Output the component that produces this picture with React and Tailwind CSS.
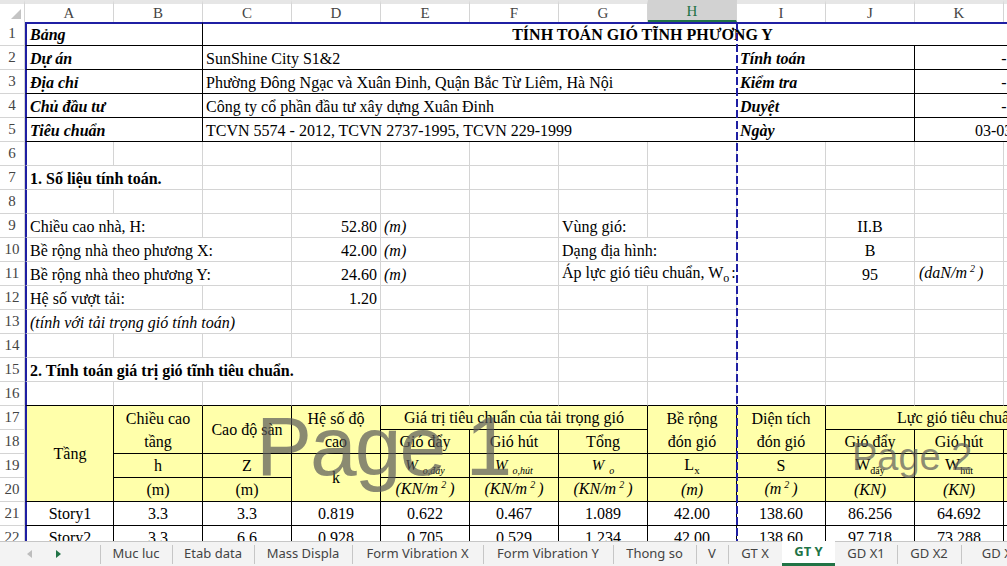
import React from "react";

// grid placement classes, written out so Tailwind picks them up
const COL = [
  "col-start-1", "col-start-2", "col-start-3", "col-start-4", "col-start-5",
  "col-start-6", "col-start-7", "col-start-8", "col-start-9", "col-start-10",
  "col-start-11", "col-start-12", "col-start-13",
];
const ROW = [
  "row-start-1", "row-start-2", "row-start-3", "row-start-4", "row-start-5",
  "row-start-6", "row-start-7", "row-start-8", "row-start-9", "row-start-10",
  "row-start-11", "row-start-12", "row-start-13", "row-start-14", "row-start-15",
  "row-start-16", "row-start-17", "row-start-18", "row-start-19", "row-start-20",
  "row-start-21", "row-start-22", "row-start-23",
];
const CSPAN = [
  "col-span-1", "col-span-1", "col-span-2", "col-span-3", "col-span-4",
  "col-span-5", "col-span-6", "col-span-7", "col-span-8", "col-span-9",
  "col-span-10", "col-span-11", "col-span-12",
];
const RSPAN = ["row-span-1", "row-span-1", "row-span-2", "row-span-3", "row-span-4"];
const JUSTIFY = { s: "justify-start", c: "justify-center", e: "justify-end" };

const LETTERS = ["A", "B", "C", "D", "E", "F", "G", "H", "I", "J", "K", "L"];

const TABS = [
  { name: "Muc luc", w: "w-[72px]" },
  { name: "Etab data", w: "w-[82px]" },
  { name: "Mass Displa", w: "w-[98px]" },
  { name: "Form Vibration X", w: "w-[131px]" },
  { name: "Form Vibration Y", w: "w-[130px]" },
  { name: "Thong so", w: "w-[83px]" },
  { name: "V", w: "w-[32px]" },
  { name: "GT X", w: "w-[54px]" },
  { name: "GT Y", w: "w-[53px]", active: true },
  { name: "GD X1", w: "w-[62px]" },
  { name: "GD X2", w: "w-[64px]" },
  { name: "GD X3", w: "w-[79px]" },
];

const INFO = [
  ["Dự án", "SunShine City S1&2", "Tính toán", "-"],
  ["Địa chỉ", "Phường Đông Ngạc và Xuân Đinh, Quận Bắc Từ Liêm, Hà Nội", "Kiểm tra", "-"],
  ["Chủ đầu tư", "Công ty cổ phần đầu tư xây dựng Xuân Đinh", "Duyệt", "-"],
  ["Tiêu chuẩn", "TCVN 5574 - 2012, TCVN 2737-1995, TCVN 229-1999", "Ngày", "03-03-2020"],
];

const STORIES = [
  ["Story1", "3.3", "3.3", "0.819", "0.622", "0.467", "1.089", "42.00", "138.60", "86.256", "64.692"],
  ["Story2", "3.3", "6.6", "0.928", "0.705", "0.529", "1.234", "42.00", "138.60", "97.718", "73.288"],
];

function WItalic({ sub }) {
  return (
    <span className="italic">
      <span className="text-[15px]">W</span>
      <span className="text-[10px] relative top-[4px] ml-[5px]">{sub}</span>
    </span>
  );
}

function Unit({ base }) {
  return (
    <span className="italic">
      ({base}
      <span className="text-[10px] relative -top-[6px] mx-[3px]">2</span>)
    </span>
  );
}

const CELLS = [
  { r: 1, c: 1, cs: 2, rb: "k", bb: "k", cls: "font-bold italic", t: "Bảng" },
  {
    r: 1, c: 3, cs: 10, rb: "n", bb: "k", j: "c", cls: "font-bold pr-[14px]",
    t: "TÍNH TOÁN GIÓ TĨNH PHƯƠNG Y",
  },
  ...INFO.flatMap((row, i) => [
    { r: i + 2, c: 1, cs: 2, rb: "k", bb: "k", cls: "font-bold italic", t: row[0] },
    { r: i + 2, c: 3, cs: 6, rb: "n", bb: "k", t: row[1] },
    { r: i + 2, c: 9, cs: 2, rb: "k", bb: "k", cls: "font-bold italic", t: row[2] },
    i === 3
      ? { r: i + 2, c: 11, cs: 2, rb: "n", bb: "k", cls: "pl-[60px]", t: row[3] }
      : { r: i + 2, c: 11, cs: 2, rb: "n", bb: "k", j: "c", t: row[3] },
  ]),

  { r: 7, c: 1, cs: 2, cls: "font-bold", t: "1. Số liệu tính toán." },
  { r: 9, c: 1, cs: 2, t: "Chiều cao nhà, H:" },
  { r: 9, c: 4, j: "e", t: "52.80" },
  { r: 9, c: 5, cls: "italic", t: "(m)" },
  { r: 9, c: 7, t: "Vùng gió:" },
  { r: 9, c: 10, j: "c", t: "II.B" },
  { r: 10, c: 1, cs: 3, t: "Bề rộng nhà theo phương X:" },
  { r: 10, c: 4, j: "e", t: "42.00" },
  { r: 10, c: 5, cls: "italic", t: "(m)" },
  { r: 10, c: 7, cs: 2, t: "Dạng địa hình:" },
  { r: 10, c: 10, j: "c", t: "B" },
  { r: 11, c: 1, cs: 3, t: "Bề rộng nhà theo phương Y:" },
  { r: 11, c: 4, j: "e", t: "24.60" },
  { r: 11, c: 5, cls: "italic", t: "(m)" },
  {
    r: 11, c: 7, cs: 3,
    t: (
      <>
        Áp lực gió tiêu chuẩn, W<span className="text-[12px] relative top-[4px] mr-[2px]">o</span>:
      </>
    ),
  },
  { r: 11, c: 10, j: "c", t: "95" },
  { r: 11, c: 11, cls: "pl-[4px]", t: <Unit base="daN/m" /> },
  { r: 12, c: 1, cs: 2, t: "Hệ số vượt tải:" },
  { r: 12, c: 4, j: "e", t: "1.20" },
  { r: 13, c: 1, cs: 3, cls: "italic", t: "(tính với tải trọng gió tính toán)" },
  { r: 15, c: 1, cs: 4, cls: "font-bold", t: "2. Tính toán giá trị gió tĩnh tiêu chuẩn." },

  // table header
  { r: 17, c: 1, rs: 4, table: true, t: "Tầng" },
  { r: 17, c: 2, rs: 2, table: true, t: <>Chiều cao<br />tầng</> },
  { r: 17, c: 3, rs: 2, table: true, t: "Cao độ sàn" },
  { r: 17, c: 4, rs: 2, table: true, t: <>Hệ số độ<br />cao</> },
  { r: 17, c: 5, cs: 3, table: true, t: "Giá trị tiêu chuẩn của tải trọng gió" },
  { r: 17, c: 8, rs: 2, table: true, t: <>Bề rộng<br />đón gió</> },
  { r: 17, c: 9, rs: 2, table: true, t: <>Diện tích<br />đón gió</> },
  { r: 17, c: 10, cs: 3, table: true, j: "s", cls: "pl-[71px]", t: "Lực gió tiêu chuẩn" },
  { r: 18, c: 5, table: true, t: "Gió đẩy" },
  { r: 18, c: 6, table: true, t: "Gió hút" },
  { r: 18, c: 7, table: true, t: "Tổng" },
  { r: 18, c: 10, table: true, t: "Gió đẩy" },
  { r: 18, c: 11, table: true, t: "Gió hút" },
  { r: 19, c: 2, table: true, t: "h" },
  { r: 19, c: 3, table: true, t: "Z" },
  { r: 19, c: 4, rs: 2, table: true, t: "k" },
  { r: 19, c: 5, table: true, t: <WItalic sub="o,đẩy" /> },
  { r: 19, c: 6, table: true, t: <WItalic sub="o,hút" /> },
  { r: 19, c: 7, table: true, t: <WItalic sub="o" /> },
  { r: 19, c: 8, table: true, t: <>L<span className="text-[11px] relative top-[4px]">x</span></> },
  { r: 19, c: 9, table: true, t: "S" },
  { r: 19, c: 10, table: true, t: <>W<span className="text-[10px] relative top-[4px]">đẩy</span></> },
  { r: 19, c: 11, table: true, t: <>W<span className="text-[10px] relative top-[4px]">hút</span></> },
  { r: 20, c: 2, table: true, t: "(m)" },
  { r: 20, c: 3, table: true, t: "(m)" },
  { r: 20, c: 5, table: true, t: <Unit base="KN/m" /> },
  { r: 20, c: 6, table: true, t: <Unit base="KN/m" /> },
  { r: 20, c: 7, table: true, t: <Unit base="KN/m" /> },
  { r: 20, c: 8, table: true, cls: "italic", t: "(m)" },
  { r: 20, c: 9, table: true, t: <Unit base="m" /> },
  { r: 20, c: 10, table: true, cls: "italic", t: "(KN)" },
  { r: 20, c: 11, table: true, cls: "italic", t: "(KN)" },
  ...STORIES.flatMap((vals, i) =>
    vals.map((v, k) => ({ r: 21 + i, c: k + 1, table: true, t: v }))
  ),
];

function cellClass({ r, c, cs = 1, rs = 1, rb, bb, table, j, cls = "" }) {
  const right = rb ?? (table ? "k" : "g");
  const bottom = bb ?? (table || r <= 5 || r === 16 ? "k" : "g");
  const parts = [COL[c], ROW[r], CSPAN[cs], RSPAN[rs], "flex overflow-hidden whitespace-nowrap"];
  if (right === "k") parts.push("border-r border-r-black");
  if (right === "g") parts.push("border-r border-r-[#d4d4d4]");
  parts.push(bottom === "k" ? "border-b border-b-black" : "border-b border-b-[#d4d4d4]");
  if (c === 1) parts.push("border-l-2 border-l-[#1f1fa3]");
  if (r === 1) parts.push("border-t-2 border-t-[#1f1fa3]");
  if (table) {
    parts.push("items-center text-center leading-[23px]", JUSTIFY[j || "c"]);
    parts.push(r <= 20 ? "bg-[#ffffaa]" : "bg-white");
  } else {
    parts.push("items-end leading-[21px] px-[3px]", JUSTIFY[j || "s"]);
  }
  parts.push(cls);
  return parts.join(" ");
}

function buildCells() {
  const taken = new Set();
  CELLS.forEach((cell) => {
    for (let r = cell.r; r < cell.r + (cell.rs || 1); r++)
      for (let c = cell.c; c < cell.c + (cell.cs || 1); c++) taken.add(`${r}-${c}`);
  });
  const all = [...CELLS];
  for (let r = 1; r <= 22; r++) {
    for (let c = 1; c <= 12; c++) {
      if (!taken.has(`${r}-${c}`)) all.push({ r, c, table: r >= 17, t: "" });
    }
  }
  return all;
}

function SheetTabs() {
  return (
    <div className="h-[25px] shrink-0 flex bg-[#f3f3f3] border-t border-t-[#c6c6c6] font-['Noto_Sans',sans-serif] text-[13px] text-[#444]">
      <div className="w-[100px] shrink-0 flex items-center pl-[27px] gap-[24px]">
        <svg width="5" height="8" viewBox="0 0 5 8">
          <polygon points="5,0 5,8 0,4" fill="#bdbdbd" />
        </svg>
        <svg width="5" height="8" viewBox="0 0 5 8">
          <polygon points="0,0 0,8 5,4" fill="#217346" />
        </svg>
      </div>
      {TABS.map((tab, i) => {
        const sep = !tab.active && !(i > 0 && TABS[i - 1].active);
        return (
          <div
            key={tab.name}
            className={`shrink-0 flex items-center ${tab.w} ${
              tab.active
                ? "bg-white font-bold text-[#217346] border-b-[3px] border-b-[#217346] -mt-px"
                : ""
            }`}
          >
            <span className={`w-px h-[19px] ${sep ? "bg-[#c6c6c6]" : ""}`} />
            <span className="flex-1 text-center pr-px">{tab.name}</span>
          </div>
        );
      })}
    </div>
  );
}

export default function App() {
  const cells = buildCells();

  return (
    <div className="w-[1007px] h-[566px] overflow-hidden flex flex-col bg-white font-['Liberation_Serif',serif] text-[16px] text-black">
      <div className="relative h-[541px] shrink-0 overflow-hidden">
        <div className="grid grid-cols-[25px_repeat(12,89px)] grid-rows-[22px_repeat(22,24px)] w-[1093px]">
          {/* corner */}
          <div className="col-start-1 row-start-1 flex items-end justify-end p-[3px] border-r border-r-[#d4d4d4] border-t-[4px] border-t-[#e6e6e6]">
            <svg width="10" height="10" viewBox="0 0 10 10">
              <polygon points="10,0 10,10 0,10" fill="#c4c4c4" />
            </svg>
          </div>
          {/* column letters */}
          {LETTERS.map((l, i) => (
            <div
              key={l}
              className={`${COL[i + 1]} row-start-1 flex items-center justify-center text-[15px] border-r border-r-[#d4d4d4] ${
                l === "H"
                  ? "bg-[#d2d2d2] text-[#217346] border-t-[3px] border-t-[#d2d2d2] border-b-2 border-b-[#217346]"
                  : "text-[#444] border-t-[4px] border-t-[#e6e6e6]"
              }`}
            >
              {l}
            </div>
          ))}
          {/* row numbers */}
          {Array.from({ length: 22 }, (_, i) => (
            <div
              key={i}
              className={`col-start-1 ${ROW[i + 1]} flex items-center justify-center text-[15px] text-[#444] border-r border-r-[#d4d4d4] border-b border-b-[#d4d4d4]`}
            >
              {i + 1}
            </div>
          ))}
          {cells.map((cell) => (
            <div key={`${cell.r}-${cell.c}`} className={cellClass(cell)}>
              <div>{cell.t}</div>
            </div>
          ))}
        </div>

        {/* page break line */}
        <div className="absolute left-[736px] top-[22px] bottom-0 w-[2px] bg-[image:repeating-linear-gradient(to_bottom,#1f1fa3_0px,#1f1fa3_8px,transparent_8px,transparent_11px)]" />

        {/* page watermarks */}
        <div className="absolute left-[256px] top-[404px] pointer-events-none font-['Liberation_Sans',sans-serif] text-[84px] leading-none tracking-[-2px] text-[#595959]/70">
          Page 1
        </div>
        <div className="absolute left-[852px] top-[438px] pointer-events-none font-['Liberation_Sans',sans-serif] text-[38px] leading-none text-[#595959]/70">
          Page 2
        </div>
      </div>
      <SheetTabs />
    </div>
  );
}
